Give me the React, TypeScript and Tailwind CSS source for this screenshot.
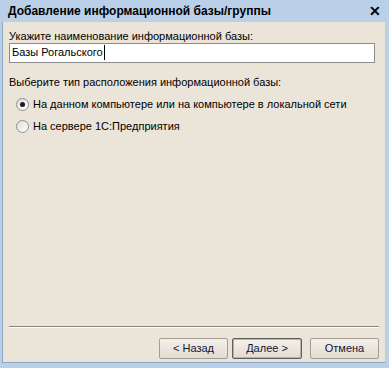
import React from "react";

function Radio({ checked }: { checked?: boolean }) {
  return (
    <div className="w-[13px] h-[13px] rounded-full border border-[#8f8f8f] bg-gradient-to-br from-[#dcdcdc] to-[#ffffff] flex items-center justify-center shrink-0">
      {checked && <div className="w-[5px] h-[5px] rounded-full bg-[#1a1a1a]" />}
    </div>
  );
}

function Btn({ children, def }: { children: React.ReactNode; def?: boolean }) {
  return (
    <div
      className={
        "h-[21px] flex items-center justify-center rounded-[2px] bg-gradient-to-b from-[#f4f1ec] to-[#e2dbd0] text-[11px] leading-[15px] text-[#10163a] " +
        (def
          ? "w-[70px] border border-[#5f5f5f] shadow-[inset_0_0_0_1px_#b8b2a8]"
          : "w-[69px] border border-[#a39d94]")
      }
    >
      {children}
    </div>
  );
}

export default function App() {
  return (
    <div
      className="w-[389px] h-[368px] bg-[#bad0e9] flex flex-col text-black"
      style={{ fontFamily: '"Liberation Sans", Arial, sans-serif' }}
    >
      <div className="h-[22px] flex items-center justify-between pl-[8px] pr-[8px] shrink-0">
        <span className="text-[12px] leading-[15px] font-bold text-black">
          Добавление информационной базы/группы
        </span>
        <span className="text-[14px] leading-[15px] font-bold">✕</span>
      </div>
      <div className="flex-1 flex ml-[2px] mr-[3px] mb-[5px] border-l border-[#8ea7c4] border-b border-r border-b-[#8ea7c4] border-r-[#bad0e9]">
        <div className="flex-1 bg-[#ebe4d8] flex flex-col pl-[6px] pr-[6px] pt-[7px] pb-[3px]">
          <div className="text-[11px] leading-[15px] h-[14px]">
            Укажите наименование информационной базы:
          </div>
          <div className="h-[20px] mr-[4px] bg-white border border-[#8c8c8c] pl-[2px] pt-[1px] text-[11px] leading-[15px] flex items-start">
            <span>Базы Рогальского</span>
            <span className="w-px h-[15px] bg-black ml-[1px]" />
          </div>
          <div className="mt-[12px] text-[11px] leading-[15px] h-[15px]">
            Выберите тип расположения информационной базы:
          </div>
          <div className="mt-[7px] ml-[7px] flex items-center gap-[4px] h-[15px] text-[11px] leading-[15px]">
            <Radio checked />
            <span>На данном компьютере или на компьютере в локальной сети</span>
          </div>
          <div className="mt-[7px] ml-[7px] flex items-center gap-[4px] h-[15px] text-[11px] leading-[15px]">
            <Radio />
            <span>На сервере 1С:Предприятия</span>
          </div>
          <div className="flex-1" />
          <div className="h-px bg-[#8a847c] border-b border-white box-content" />
          <div className="mt-[10px] flex justify-end items-center">
            <Btn>&lt; Назад</Btn>
            <div className="w-[4px]" />
            <Btn def>Далее &gt;</Btn>
            <div className="w-[8px]" />
            <Btn>Отмена</Btn>
          </div>
        </div>
      </div>
    </div>
  );
}
